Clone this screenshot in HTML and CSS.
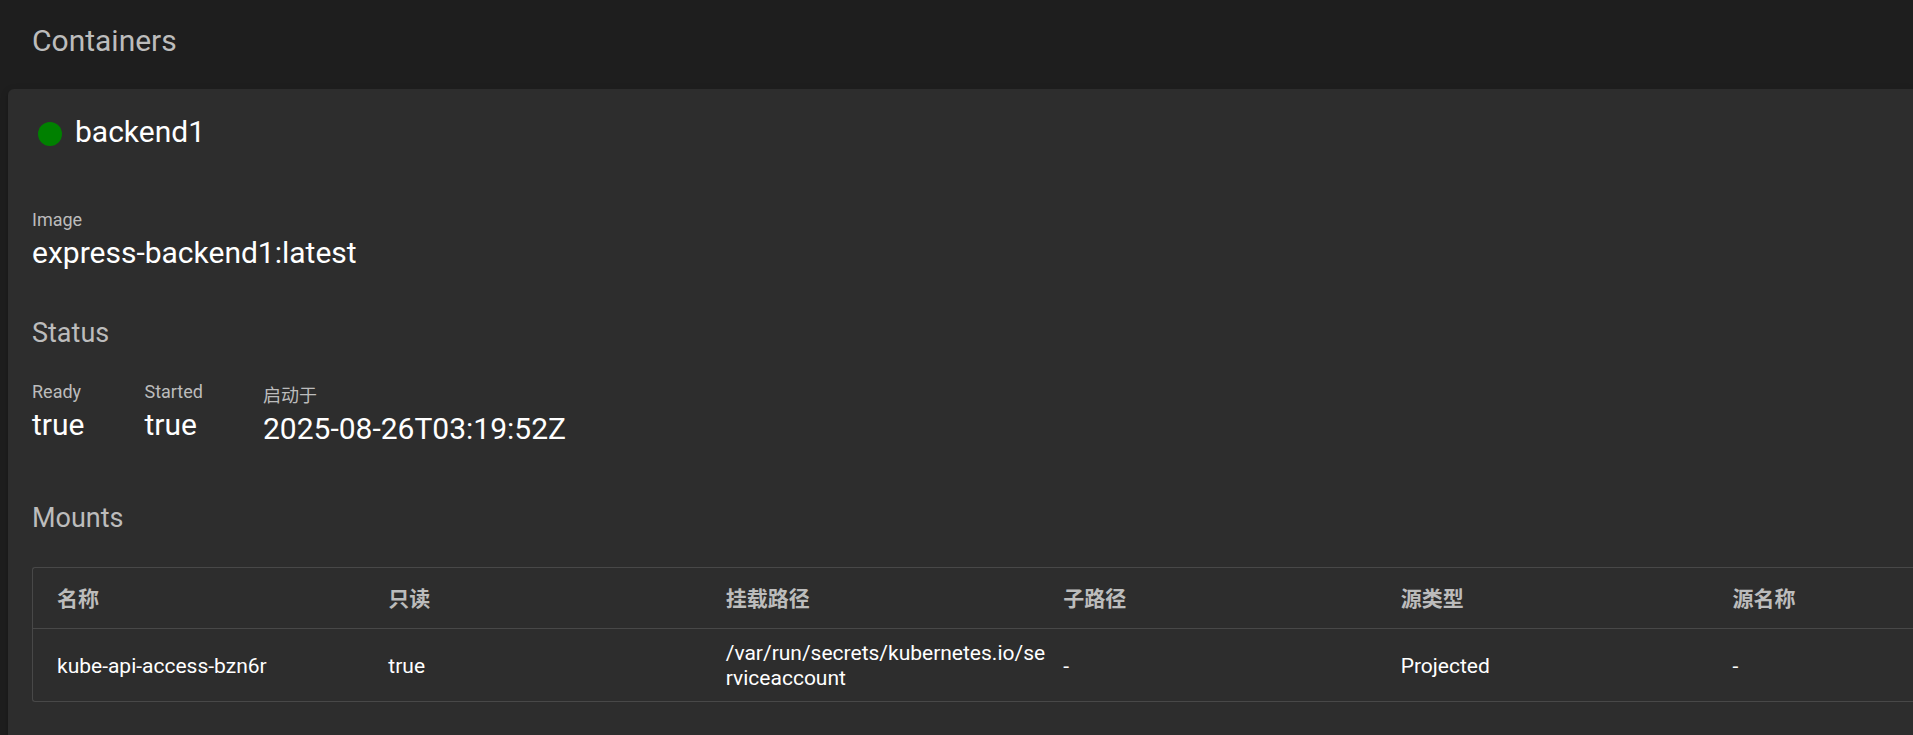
FILE: index.html
```html
<!DOCTYPE html>
<html lang="zh-CN">
<head>
<meta charset="utf-8">
<title>Containers</title>
<link rel="stylesheet" href="styles.css">
</head>
<body>
<main class="page">
  <h1 class="page-title">Containers</h1>
  <section class="card">
    <header class="card-header">
      <svg class="status-dot" viewBox="0 0 24 24" aria-hidden="true"><circle cx="12" cy="12" r="12"/></svg>
      <h2 class="card-title">backend1</h2>
    </header>
    <dl class="properties">
      <div class="property"><dt>Image</dt><dd>express-backend1:latest</dd></div>
    </dl>
    <h3 class="section-title">Status</h3>
    <dl class="properties">
      <div class="property"><dt>Ready</dt><dd>true</dd></div>
      <div class="property"><dt>Started</dt><dd>true</dd></div>
      <div class="property property-cjk"><dt>启动于</dt><dd>2025-08-26T03:19:52Z</dd></div>
    </dl>
    <h3 class="section-title section-mounts">Mounts</h3>
    <div class="table-frame">
      <table class="mounts">
        <colgroup>
          <col class="col-name"><col class="col-mid"><col class="col-mid"><col class="col-mid"><col class="col-type"><col>
        </colgroup>
        <thead>
          <tr><th scope="col">名称</th><th scope="col">只读</th><th scope="col">挂载路径</th><th scope="col">子路径</th><th scope="col">源类型</th><th scope="col">源名称</th></tr>
        </thead>
        <tbody>
          <tr><td>kube-api-access-bzn6r</td><td>true</td><td>/var/run/secrets/kubernetes.io/serviceaccount</td><td>-</td><td>Projected</td><td>-</td></tr>
        </tbody>
      </table>
    </div>
  </section>
</main>
</body>
</html>
```

FILE: styles.css
```css
* {
  box-sizing: border-box;
}

body {
  margin: 0;
  background: #1e1e1e;
  color: #fff;
  font-family: Roboto, "Noto Sans CJK SC", sans-serif;
}

h1, h2, h3, dl, dd {
  margin: 0;
  font-weight: 400;
}

.page {
  display: flex;
  flex-direction: column;
  min-height: 100vh;
  padding-left: 8px;
  overflow: hidden;
}

.page-title {
  padding: 23px 24px 30px;
  color: #bcbcbc;
  font-size: 30px;
  line-height: 36px;
}

.card {
  flex: 1;
  padding: 25px 0 24px 24px;
  background: #2d2d2d;
  border-top-left-radius: 6px;
  box-shadow: 0 3px 3px rgba(0, 0, 0, 0.2), 0 2px 8px rgba(0, 0, 0, 0.12);
}

.card-header {
  display: flex;
  align-items: center;
  gap: 13px;
  padding-left: 6px;
  margin-bottom: 59px;
}

.status-dot {
  width: 24px;
  height: 24px;
  margin-top: 4px;
  fill: #008000;
}

.card-title {
  font-size: 30px;
  line-height: 36px;
}

.properties {
  display: flex;
  gap: 60px;
}

.property dt {
  margin-bottom: 5px;
  color: #bcbcbc;
  font-size: 18px;
  line-height: 21px;
}

.property dd {
  font-size: 30px;
  line-height: 36px;
}

.property-cjk dt {
  margin-bottom: 0;
  line-height: 30px;
}

.section-title {
  margin: 46px 0 32px;
  color: #bcbcbc;
  font-size: 27px;
  line-height: 32px;
}

.section-mounts {
  margin: 55px 0 33px;
}

.table-frame {
  border: 1px solid #484848;
  border-right: 0;
  border-radius: 3px 0 0 3px;
}

.mounts {
  width: 100%;
  table-layout: fixed;
  border-collapse: separate;
  border-spacing: 0;
  font-size: 21px;
  line-height: 25px;
  text-align: left;
}

.col-name {
  width: 18.9%;
}

.col-mid {
  width: 17.95%;
}

.col-type {
  width: 17.65%;
}

.mounts th {
  height: 61px;
  padding: 2px 16px 0 0;
  border-bottom: 1px solid #484848;
  color: #bcbcbc;
  font-weight: 700;
}

.mounts td {
  height: 72px;
  padding: 2px 16px 0 0;
  overflow-wrap: anywhere;
}

.mounts th:first-child,
.mounts td:first-child {
  padding-left: 24px;
}
```
